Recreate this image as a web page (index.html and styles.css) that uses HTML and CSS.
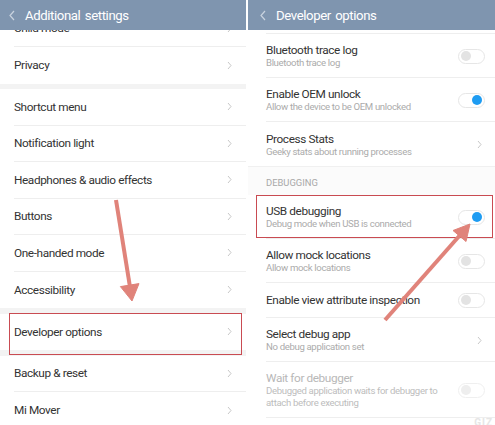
FILE: index.html
```html
<!DOCTYPE html>
<html>
<head>
<meta charset="utf-8">
<link rel="stylesheet" href="styles.css">
</head>
<body>
<div class="screen">
  <section class="panel left">
    <header class="bar">
      <svg class="back" width="6" height="11" viewBox="0 0 6 11"><path d="M5 1 L1 5.5 L5 10" fill="none" stroke="#c9d3df" stroke-width="1.2"/></svg>
      <span class="bar-title">Additional settings</span>
    </header>
    <div class="list">
      <div class="clip"><div class="row nav clipped"><span class="label">Child mode</span><svg class="chev" width="5" height="9" viewBox="0 0 5 9"><path d="M1 1 L4 4.5 L1 8" fill="none" stroke="#c8c8c8" stroke-width="1"/></svg></div></div>
      <div class="row nav last"><span class="label">Privacy</span><svg class="chev" width="5" height="9" viewBox="0 0 5 9"><path d="M1 1 L4 4.5 L1 8" fill="none" stroke="#c8c8c8" stroke-width="1"/></svg></div>
      <div class="gap"></div>
      <div class="row nav"><span class="label">Shortcut menu</span><svg class="chev" width="5" height="9" viewBox="0 0 5 9"><path d="M1 1 L4 4.5 L1 8" fill="none" stroke="#c8c8c8" stroke-width="1"/></svg></div>
      <div class="row nav"><span class="label">Notification light</span><svg class="chev" width="5" height="9" viewBox="0 0 5 9"><path d="M1 1 L4 4.5 L1 8" fill="none" stroke="#c8c8c8" stroke-width="1"/></svg></div>
      <div class="row nav"><span class="label">Headphones &amp; audio effects</span><svg class="chev" width="5" height="9" viewBox="0 0 5 9"><path d="M1 1 L4 4.5 L1 8" fill="none" stroke="#c8c8c8" stroke-width="1"/></svg></div>
      <div class="row nav"><span class="label">Buttons</span><svg class="chev" width="5" height="9" viewBox="0 0 5 9"><path d="M1 1 L4 4.5 L1 8" fill="none" stroke="#c8c8c8" stroke-width="1"/></svg></div>
      <div class="row nav"><span class="label">One-handed mode</span><svg class="chev" width="5" height="9" viewBox="0 0 5 9"><path d="M1 1 L4 4.5 L1 8" fill="none" stroke="#c8c8c8" stroke-width="1"/></svg></div>
      <div class="row nav last"><span class="label">Accessibility</span><svg class="chev" width="5" height="9" viewBox="0 0 5 9"><path d="M1 1 L4 4.5 L1 8" fill="none" stroke="#c8c8c8" stroke-width="1"/></svg></div>
      <div class="gap"></div>
      <div class="row nav last marked"><span class="label">Developer options</span><svg class="chev" width="5" height="9" viewBox="0 0 5 9"><path d="M1 1 L4 4.5 L1 8" fill="none" stroke="#c8c8c8" stroke-width="1"/></svg><span class="hl hl-left"></span></div>
      <div class="gap"></div>
      <div class="row nav"><span class="label">Backup &amp; reset</span><svg class="chev" width="5" height="9" viewBox="0 0 5 9"><path d="M1 1 L4 4.5 L1 8" fill="none" stroke="#c8c8c8" stroke-width="1"/></svg></div>
      <div class="row nav last"><span class="label">Mi Mover</span><svg class="chev" width="5" height="9" viewBox="0 0 5 9"><path d="M1 1 L4 4.5 L1 8" fill="none" stroke="#c8c8c8" stroke-width="1"/></svg></div>
    </div>
  </section>

  <section class="panel right">
    <header class="bar">
      <svg class="back" width="6" height="11" viewBox="0 0 6 11"><path d="M5 1 L1 5.5 L5 10" fill="none" stroke="#c9d3df" stroke-width="1.2"/></svg>
      <span class="bar-title">Developer options</span>
    </header>
    <div class="list">
      <div class="top-sliver"></div>
      <div class="opt">
        <div class="txt"><div class="title">Bluetooth trace log</div><div class="sub">Bluetooth trace log</div></div>
        <span class="toggle"><span class="knob"></span></span>
      </div>
      <div class="opt">
        <div class="txt"><div class="title">Enable OEM unlock</div><div class="sub">Allow the device to be OEM unlocked</div></div>
        <span class="toggle on"><span class="knob"></span></span>
      </div>
      <div class="opt last">
        <div class="txt"><div class="title">Process Stats</div><div class="sub">Geeky stats about running processes</div></div>
        <svg class="chev" width="5" height="9" viewBox="0 0 5 9"><path d="M1 1 L4 4.5 L1 8" fill="none" stroke="#c8c8c8" stroke-width="1"/></svg>
      </div>
      <div class="section">DEBUGGING</div>
      <div class="opt marked">
        <div class="txt"><div class="title">USB debugging</div><div class="sub">Debug mode when USB is connected</div></div>
        <span class="toggle on"><span class="knob"></span></span>
        <span class="hl hl-right"></span>
      </div>
      <div class="opt">
        <div class="txt"><div class="title">Allow mock locations</div><div class="sub">Allow mock locations</div></div>
        <span class="toggle"><span class="knob"></span></span>
      </div>
      <div class="opt single">
        <div class="txt"><div class="title">Enable view attribute inspection</div></div>
        <span class="toggle"><span class="knob"></span></span>
      </div>
      <div class="opt">
        <div class="txt"><div class="title">Select debug app</div><div class="sub">No debug application set</div></div>
        <svg class="chev" width="5" height="9" viewBox="0 0 5 9"><path d="M1 1 L4 4.5 L1 8" fill="none" stroke="#c8c8c8" stroke-width="1"/></svg>
      </div>
      <div class="opt disabled">
        <div class="txt"><div class="title">Wait for debugger</div><div class="sub">Debugged application waits for debugger to<br>attach before executing</div></div>
        <span class="toggle"><span class="knob"></span></span>
      </div>
    </div>
    <span class="watermark">GIZ</span>
  </section>

  <svg class="arrows" width="495" height="425" viewBox="0 0 495 425">
    <g fill="#e0837a" stroke="#e0837a">
      <line x1="116" y1="200" x2="130" y2="287" stroke-width="4"/>
      <polygon points="132,301 139,283.6 120.4,286.6" stroke-width="1" stroke-linejoin="round"/>
      <line x1="385" y1="320" x2="461" y2="234" stroke-width="4"/>
      <polygon points="470,224 466,241.5 453,230.5" stroke-width="1" stroke-linejoin="round"/>
    </g>
  </svg>
</div>
</body>
</html>
```

FILE: styles.css
```css
html, body {
  margin: 0;
  padding: 0;
  background: #ffffff;
}
body {
  font-family: "Roboto", "Liberation Sans", sans-serif;
  color: #333333;
}
.screen {
  position: relative;
  width: 495px;
  height: 425px;
  overflow: hidden;
  display: flex;
  gap: 2px;
}
.panel {
  position: relative;
  display: flex;
  flex-direction: column;
  overflow: hidden;
  background: #ffffff;
}
.panel.left { width: 246px; }
.panel.right { flex: 1; }

.bar {
  height: 30px;
  flex: none;
  background: #7f95af;
  display: flex;
  align-items: center;
  padding-left: 9px;
  gap: 10px;
  color: #ffffff;
}
.bar-title {
  font-size: 13.2px;
  letter-spacing: -0.4px;
  word-spacing: 1.5px;
}
.panel.right .bar { padding-left: 12px; gap: 10px; }

/* left list */
.list { display: flex; flex-direction: column; }
.row {
  position: relative;
  height: 36.5px;
  flex: none;
  box-sizing: border-box;
  margin-left: 14px;
  padding-right: 14px;
  display: flex;
  align-items: center;
  justify-content: space-between;
  border-bottom: 1px solid #eeeeee;
  font-size: 11.8px;
  letter-spacing: -0.4px;
}
.row.last { border-bottom: none; }
.clip {
  height: 17px;
  overflow: hidden;
  flex: none;
}
.row.clipped { margin-top: -19.5px; }
.gap {
  height: 5.5px;
  flex: none;
  background: #f3f3f3;
}
.chev { flex: none; }

.hl {
  position: absolute;
  border: 1.5px solid #c94b52;
  box-sizing: border-box;
  pointer-events: none;
}
.hl-left {
  left: -5px;
  right: 4px;
  top: -1px;
  bottom: -4.5px;
}
.hl-right {
  left: -10px;
  right: 2px;
  top: 0;
  bottom: 0;
}

/* right list */
.top-sliver {
  height: 3px;
  flex: none;
  margin-left: 18px;
  border-bottom: 1px solid #eeeeee;
}
.opt {
  position: relative;
  flex: none;
  box-sizing: border-box;
  margin-left: 18px;
  padding: 9px 10px 8px 0;
  min-height: 44px;
  display: flex;
  align-items: center;
  justify-content: space-between;
  border-bottom: 1px solid #eeeeee;
}
.opt.last { border-bottom: none; }
.opt .chev { margin-right: 3px; }
.opt.single { min-height: 35px; padding-top: 8px; padding-bottom: 8px; }
.opt.disabled { min-height: 55px; }
.title {
  font-size: 11.8px;
  letter-spacing: -0.4px;
  line-height: 14px;
  color: #333333;
}
.sub {
  font-size: 9.6px;
  letter-spacing: -0.35px;
  line-height: 12px;
  color: #ababab;
  margin-top: 0;
}
.opt.disabled .title { color: #b8b8b8; }
.opt.disabled .sub { color: #bdbdbd; }
.opt.disabled .toggle { opacity: 0.6; }

.section {
  height: 29px;
  flex: none;
  box-sizing: border-box;
  padding-left: 18px;
  padding-top: 10px;
  font-size: 9.4px;
  color: #a8a8a8;
  background: #fbfbfb;
  border-top: 1px solid #f0f0f0;
}

.toggle {
  flex: none;
  width: 27px;
  height: 15px;
  box-sizing: border-box;
  border: 1px solid #e6e6e6;
  border-radius: 8px;
  background: #ffffff;
  display: flex;
  align-items: center;
  padding: 0 2px;
}
.knob {
  width: 10px;
  height: 10px;
  border-radius: 50%;
  background: #e3e3e3;
}
.toggle.on { justify-content: flex-end; }
.toggle.on .knob { background: #1e9cf2; }

.watermark {
  position: absolute;
  right: 2px;
  bottom: -3px;
  font-size: 10px;
  font-weight: bold;
  color: #e6e6e6;
  letter-spacing: 1px;
}

.arrows {
  position: absolute;
  left: 0;
  top: 0;
  pointer-events: none;
}
```
